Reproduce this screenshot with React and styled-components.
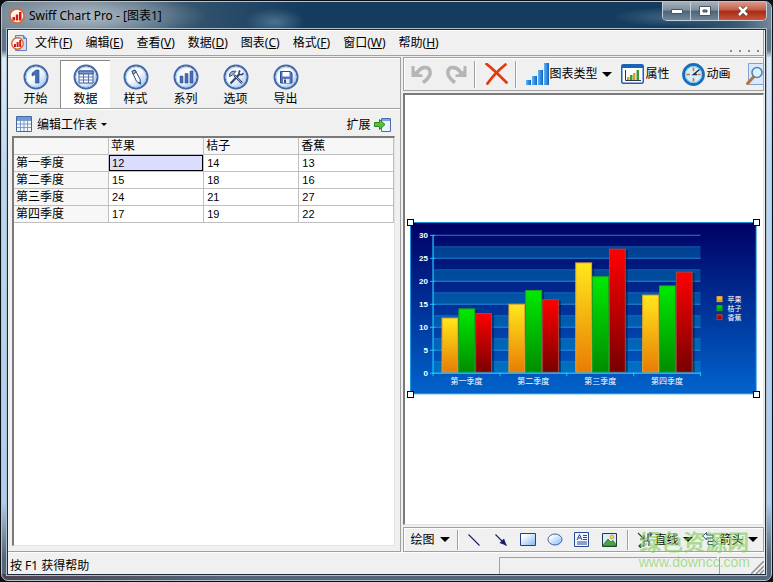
import React, { useState } from "react";
import styled, { createGlobalStyle, css } from "styled-components";

const ui = `"Noto Sans", "Noto Sans CJK SC", sans-serif`;
const arial = `"Liberation Sans", "Noto Sans CJK SC", sans-serif`;

const GlobalStyle = createGlobalStyle`
  * { box-sizing: border-box; }
  body { margin: 0; background: #0c0f14; overflow: hidden; }
  button { font: inherit; color: inherit; background: none; border: 0; padding: 0; margin: 0; cursor: default; }
  svg { display: block; flex: none; }
`;

const Desktop = styled.div`
  height: 100vh;
  padding: 1px;
  display: flex;
  font: 12px/16px ${ui};
  color: #000;
`;

const Frame = styled.div`
  flex: 1;
  min-width: 0;
  display: flex;
  flex-direction: column;
  padding: 0 5px 5px;
  border: 1px solid #b4c3cf;
  border-radius: 7px;
  background:
    linear-gradient(#153c5e, #153c5e) 50% 0 / calc(100% - 12px) 28px no-repeat,
    linear-gradient(90deg, #4e4450, #536779 30%, #536779) 0 100% / 100% 6px no-repeat,
    linear-gradient(#6b7d8d 0, #5c7588 48px, #dcebf8 56px, #b9d8f6 170px, #aecdef 500px, #566779 555px);
`;

const TitleBar = styled.header`
  flex: none;
  height: 27px;
  margin: 0 -5px;
  padding-left: 7px;
  display: flex;
  align-items: center;
  gap: 4px;
  border-radius: 6px 6px 0 0;
  background:
    radial-gradient(ellipse 120px 24px at 85px 14px, rgba(190, 202, 212, 0.75), rgba(140, 160, 176, 0.5) 60%, transparent),
    radial-gradient(ellipse 30px 14px at 273px 20px, rgba(120, 160, 190, 0.5), transparent),
    radial-gradient(ellipse 60px 10px at 670px 15px, rgba(130, 165, 190, 0.4), transparent),
    linear-gradient(90deg, #74818d 0, #7b8995 90px, #36556f 180px, #153c5e 300px, #153c5e 88%, #3d5b74 96%, #74889a);
`;

const Title = styled.h1`
  margin: 0;
  flex: 1;
  font-size: 12px;
  font-weight: 400;
`;

const WindowButtons = styled.div`
  align-self: flex-start;
  display: flex;
  height: 19px;
  margin-right: 4px;
  border: 1px solid #c4d0da;
  border-top: 0;
  border-radius: 0 0 5px 5px;
  overflow: hidden;
`;

const WindowButton = styled.button`
  width: ${(p) => (p.$close ? 47 : 28)}px;
  display: grid;
  place-items: center;
  border-right: ${(p) => (p.$close ? 0 : 1)}px solid #c4d0da;
  background: ${(p) =>
    p.$close
      ? "linear-gradient(#d99a8c, #c65b46 45%, #a62a14 50%, #c9553a)"
      : "linear-gradient(#a2b0bb, #7e909e 45%, #4c6478 50%, #6f8798)"};
`;

const Client = styled.main`
  flex: 1;
  min-height: 0;
  display: flex;
  flex-direction: column;
  position: relative;
  padding-right: 1px;
  border: 1px solid #1f2c38;
  box-shadow: 0 0 0 1px #aebdca;
  background: #f0f0f0;
`;

const MenuBar = styled.nav`
  flex: none;
  height: 26px;
  display: flex;
  align-items: center;
  gap: 13px;
  padding-left: 3px;
  border: solid #a0a0a0;
  border-width: 0 1px 1px 0;
  box-shadow: inset 1px 1px #fff;
  svg:first-child { margin-right: -5px; }
`;

const MenuItem = styled.button`
  white-space: nowrap;
`;

const Grip = styled.div`
  margin-left: auto;
  align-self: flex-end;
  display: flex;
  gap: 7px;
  padding: 0 4px 3px 0;
`;

const GripDot = styled.i`
  width: 2px;
  height: 2px;
  background: #8c8c8c;
`;

const Panes = styled.div`
  flex: 1;
  min-height: 0;
  display: grid;
  grid-template-columns: minmax(0, 12fr) minmax(0, 11fr);
  gap: 2px;
  padding-top: 1px;
`;

const Pane = styled.section`
  display: flex;
  flex-direction: column;
  min-height: 0;
  min-width: 0;
`;

const DataPane = styled(Pane)`
  border: solid #a0a0a0;
  border-width: 1px 1px 1px 0;
`;

const Tabs = styled.div`
  flex: none;
  height: 51px;
  display: flex;
  padding: 2px 0 0 2px;
  border-bottom: 1px solid #a0a0a0;
  box-shadow: inset 0 1px #fff, 0 1px #fff;
`;

const Tab = styled.button`
  width: 50px;
  height: 48px;
  padding-top: 3px;
  display: flex;
  flex-direction: column;
  align-items: center;
  gap: 1px;
  font-family: ${arial};
  border: solid transparent;
  border-width: 1px 0 0 1px;
  ${(p) =>
    p.$active &&
    css`
      background: #fff;
      border-color: #8a8a8a;
    `}
`;

const SheetBar = styled.div`
  flex: none;
  height: 27px;
  display: flex;
  align-items: center;
  justify-content: space-between;
  padding: 4px 8px 0;
`;

const BarButton = styled.button`
  display: flex;
  align-items: center;
  gap: ${(p) => p.$gap ?? 4}px;
  white-space: nowrap;
  flex: none;
`;

const Sunken = styled.div`
  flex: 1;
  min-height: 0;
  background: #fff;
  border: solid;
  border-width: 2px 1px 1px 2px;
  border-color: #7a7a7a #e3e3e3 #e3e3e3 #7a7a7a;
  overflow: hidden;
`;

const Sheet = styled(Sunken)`
  margin: 0 5px 5px 4px;
`;

const Grid = styled.table`
  width: 100%;
  table-layout: fixed;
  border-collapse: separate;
  border-spacing: 0;
  th, td {
    height: 17px;
    padding: 0 3px;
    text-align: left;
    font: 11px/16px ${arial};
    border: solid #c0c0c0;
    border-width: 0 1px 1px 0;
  }
  th {
    background: #f7f7f7;
    font-size: 12px;
    padding: 0 2px;
  }
`;

const Cell = styled.td`
  ${(p) =>
    p.$selected &&
    css`
      background: #dcdcff;
      box-shadow: inset 0 0 0 1px #000;
    `}
`;

const ChartPane = styled(Pane)`
  gap: 2px;
`;

const ToolBar = styled.div`
  flex: none;
  height: ${(p) => p.$height}px;
  display: flex;
  align-items: center;
  padding-left: ${(p) => p.$inset}px;
  border: 1px solid #a0a0a0;
  box-shadow: inset 1px 1px #fff;
  overflow: hidden;
`;

const Tool = styled(BarButton)`
  margin-right: ${(p) => p.$after}px;
`;

const Separator = styled.span`
  flex: none;
  width: 2px;
  height: ${(p) => p.$height}px;
  margin-right: ${(p) => p.$after}px;
  background: linear-gradient(90deg, #a0a0a0 50%, #fff 50%);
`;

const Label = styled.span`
  margin-right: ${(p) => p.$after}px;
`;

const Canvas = styled(Sunken)`
  display: grid;
  align-items: center;
  padding: 0 6px 2px 5px;
`;

const ChartFrame = styled.div`
  position: relative;
  svg { width: 100%; height: auto; }
`;

const Handle = styled.i`
  position: absolute;
  width: 7px;
  height: 7px;
  background: #fff;
  border: 1px solid #000;
  ${(p) => p.$v}: -3px;
  ${(p) => p.$h}: -3px;
`;

const StatusBar = styled.footer`
  flex: none;
  height: 22px;
  display: flex;
  align-items: flex-end;
  gap: 2px;
  padding-left: 2px;
  box-shadow: inset 0 1px #fff;
`;

const Message = styled.span`
  flex: 67;
`;

const StatusBox = styled.span`
  flex: ${(p) => p.$grow};
  height: 17px;
  display: flex;
  justify-content: flex-end;
  align-items: flex-end;
  border: solid #a0a0a0;
  border-width: 1px 0 0 1px;
`;

const Watermark = styled.div`
  position: absolute;
  right: 15px;
  bottom: 4px;
  color: rgba(126, 204, 82, 0.62);
  font: 14px/15px ${arial};
  text-align: center;
  pointer-events: none;
  strong { display: block; font-size: 22px; line-height: 24px; }
`;

const Logo = () => (
  <svg width="16" height="16" viewBox="0 0 16 16">
    <circle cx="8" cy="8" r="7" fill="#fff5ec" stroke="#d9682c" strokeWidth="1.6" />
    <path d="M3.500 9H6v3.500H3.500zM6.800 6.500h2.400v6H6.800zM10 4h2.500v8.500H10z" fill="#d6161c" />
  </svg>
);

const DocLogo = () => (
  <svg width="16" height="16" viewBox="0 0 16 16">
    <path d="M4.500.5h8l3 3v12h-11z" fill="#cfdcf6" stroke="#6a7fb6" />
    <path d="M12.500.5v3h3" fill="#8ba3d8" stroke="#6a7fb6" />
    <circle cx="6.500" cy="8.500" r="5.700" fill="#fff" stroke="#d9682c" strokeWidth="1.400" />
    <path d="M3 9h2v3H3zM5.600 7h2v5h-2zM8.200 5h2v7h-2z" fill="#d6161c" />
  </svg>
);

const Caret = ({ w = 10 }) => (
  <svg width={w} height={w / 2} viewBox="0 0 10 5"><path d="M0 0h10L5 5z" fill="#000" /></svg>
);

const glyphs = {
  start: (
    <path d="M9 9.200 13 6h3v13h-3.500V10.500L9 12z" fill="#4a6cb4" stroke="#274882" strokeWidth=".6" />
  ),
  data: (
    <g>
      <path d="M6 7h14v12H6z" fill="#fff" stroke="#3a568f" />
      <path d="M6 7h14v3H6z" fill="#7896cc" stroke="#3a568f" />
      <path d="M6 13h14M6 16h14M10.500 10v9M15.500 10v9" stroke="#5673ac" />
    </g>
  ),
  style: (
    <g stroke="#33496f" strokeLinejoin="round">
      <path d="M9 7.500 12 6l5 9 .5 5-4-2.700z" fill="#fff" />
      <path d="M9 7.500 12 6l1.200 2.200L10.300 10z" fill="#a9bcdc" />
      <path d="m16.200 18.200 1.300 1.800-2.200-1.300z" fill="#33496f" />
    </g>
  ),
  series: (
    <g fill="#4a6cb0" stroke="#2c4a88" strokeWidth=".5">
      <path d="M7 12h3v7H7zM12 9.500h3V19h-3zM17 7h3v12h-3z" />
    </g>
  ),
  options: (
    <g fill="none" stroke="#34486c">
      <path d="m7.500 19.500 9-9.500" strokeWidth="2.200" />
      <path d="m11 11 8 8" strokeWidth="2.400" />
      <path d="m11.500 11.500 7 7" stroke="#b9c9e6" strokeWidth=".8" />
      <path d="M6.500 12.500C6 9 8.500 6.500 13 7.300L9.500 11z" fill="#9db2d8" />
      <path d="M17.300 6.500c-2.300 1.300-1.600 4.200.8 4.300 1.300 0 2-.8 2.200-2" strokeWidth="1.600" />
    </g>
  ),
  export: (
    <g>
      <path d="M7.500 7.500h10l1.500 1.500v10H7.500z" fill="#5674c0" stroke="#2f4c90" />
      <path d="M9.500 8h7v4.500h-7z" fill="#fff" />
      <path d="M10 15h6.500v4H10z" fill="#e4ecf9" />
      <path d="M11 15.500h2V19h-2z" fill="#2f4c90" />
    </g>
  ),
};

const RoundIcon = ({ name }) => (
  <svg width="26" height="26" viewBox="0 0 26 26">
    <defs>
      <linearGradient id={`disc-${name}`} x1="0" y1="0" x2="1" y2="1">
        <stop offset="0" stopColor="#d6ebff" />
        <stop offset=".45" stopColor="#fff" />
        <stop offset="1" stopColor="#8dbcf0" />
      </linearGradient>
    </defs>
    <circle cx="13" cy="13" r="11.500" fill={`url(#disc-${name})`} stroke="#4567a6" strokeWidth="2" />
    <circle cx="13" cy="13" r="10" fill="none" stroke="#a9cdf3" />
    {glyphs[name]}
  </svg>
);

const SheetIcon = () => (
  <svg width="17" height="17" viewBox="0 0 17 17">
    <path d="M.5.500h15v15H.5z" fill="#f4f9ff" stroke="#47689f" />
    <path d="M1 1h14v3H1z" fill="#6c9ad8" />
    <path d="M1 4.500h14M1 8h14M1 11.500h14M4.500 4v11M8 4v11M11.500 4v11" stroke="#7c9ac6" />
  </svg>
);

const ExpandIcon = () => (
  <svg width="18" height="16" viewBox="0 0 18 16">
    <path d="M7.500 1.500h9v13h-9z" fill="#eaf4ff" stroke="#4a6fae" />
    <path d="M8 2h8v2H8z" fill="#7aa2df" />
    <path d="M.5 5.500h5v-3l5.500 5-5.500 5v-3h-5z" fill="#58c23a" stroke="#2b8423" />
  </svg>
);

const Undo = ({ flip }) => (
  <svg width="24" height="22" viewBox="0 0 24 22">
    <g transform={flip ? "matrix(-1 0 0 1 24 0)" : undefined}>
      <path d="M6.500 11C10 3.500 18.500 2.500 20 8c1 4-2 8-7 11.500" fill="none" stroke="#b5b5b5" strokeWidth="3.600" />
      <path d="M1.500 3v11h11v-2.500L8.500 11 4.500 7.500V3z" fill="#b5b5b5" />
    </g>
  </svg>
);

const Cross = () => (
  <svg width="23" height="22" viewBox="0 0 23 22">
    <path d="M1.500 1c7 5.500 13 11.500 20 18.500M20.500 1.500C13 7.500 7.500 13.500 2.500 20.500" fill="none" stroke="#e03a10" strokeWidth="2.800" strokeLinecap="round" />
  </svg>
);

const TypeIcon = () => (
  <svg width="23" height="24" viewBox="0 0 23 24">
    <defs>
      <linearGradient id="type-bar" x1="0" x2="1">
        <stop offset="0" stopColor="#62b5f5" /><stop offset="1" stopColor="#0e63c5" />
      </linearGradient>
    </defs>
    <g fill="url(#type-bar)">
      <path d="M0 18h5v5H0z" /><path d="M6 14h5v9H6z" /><path d="M12 8h5v15h-5z" /><path d="M18 1h5v22h-5z" />
    </g>
  </svg>
);

const PropsIcon = () => (
  <svg width="23" height="20" viewBox="0 0 23 20">
    <rect x=".75" y=".75" width="21.500" height="18.500" rx="1.500" fill="#fff" stroke="#1c62b6" strokeWidth="1.500" />
    <path d="M1 1h21v3H1z" fill="#1c62b6" />
    <path d="M4.500 6v10.500H20" fill="none" stroke="#334" />
    <path d="M6 13h2.500v3H6zM12 9h2.500v7H12z" fill="#e89a14" />
    <path d="M9 11h2.500v5H9zM15.500 6H18v10h-2.500z" fill="#3b9a35" />
  </svg>
);

const ClockIcon = () => (
  <svg width="23" height="23" viewBox="0 0 23 23">
    <circle cx="11.500" cy="11.500" r="10" fill="#d6f0fb" stroke="#1c6bb6" strokeWidth="2.800" />
    <circle cx="11.500" cy="11.500" r="8" fill="none" stroke="#80c8ea" />
    <path d="M11.500 4.500V8M11.500 15v3.500M4.500 11.500H8M15.500 11.500h3" stroke="#e06a3c" strokeWidth="1.600" />
    <path d="m17.500 6.500-6 5H15" fill="none" stroke="#19334e" strokeWidth="1.500" />
  </svg>
);

const PreviewIcon = () => (
  <svg width="23" height="24" viewBox="0 0 23 24">
    <path d="M2.500 1.500h14l5 5v16h-19z" fill="#dce8fb" stroke="#7e9fd8" />
    <path d="m8 14.500-6.500 7" stroke="#b6713c" strokeWidth="3" strokeLinecap="round" />
    <circle cx="11" cy="10.500" r="5" fill="#d9f2ff" stroke="#5a80ac" strokeWidth="1.600" />
  </svg>
);

const LineIcon = ({ arrow }) => (
  <svg width="12" height="12" viewBox="0 0 12 12">
    <path d="m.5.5 11 11" stroke="#1b1b6e" strokeWidth="1.100" />
    {arrow && <path d="M11.500 11.500 9 4.500 4.500 9z" fill="#1b1b6e" />}
  </svg>
);

const ShapeIcon = ({ round }) => (
  <svg width="16" height="13" viewBox="0 0 16 13">
    <defs>
      <linearGradient id={`shape-${!!round}`} x1="0" y1="0" x2="1" y2="1">
        <stop offset=".2" stopColor="#fff" /><stop offset="1" stopColor="#7fb8f4" />
      </linearGradient>
    </defs>
    {round
      ? <ellipse cx="8" cy="6.500" rx="7" ry="5.500" fill="url(#shape-true)" stroke="#3f61a5" />
      : <path d="M.5.5h15v12H.5z" fill="url(#shape-false)" stroke="#243f86" />}
  </svg>
);

const TextBoxIcon = () => (
  <svg width="16" height="15" viewBox="0 0 16 15">
    <path d="M.5.5h14v14H.5z" fill="#eff6ff" stroke="#2b4a94" />
    <path d="m3 8 2.500-5.500L8 8M4 6h3M9 3.500h4M9 5.500h4M9 7.500h4M3 10h10M3 12h10" fill="none" stroke="#2b4a94" />
  </svg>
);

const PictureIcon = () => (
  <svg width="15" height="14" viewBox="0 0 15 14">
    <path d="M.5.5h14v13H.5z" fill="#d7edff" stroke="#22364e" />
    <circle cx="10" cy="4" r="1.800" fill="#ffd83a" stroke="#c78a14" strokeWidth=".7" />
    <path d="m1 12 5-6 3 3 2-1.500 3 4V13H1z" fill="#4fa33c" stroke="#246824" strokeWidth=".7" />
  </svg>
);

const ConnectorIcon = () => (
  <svg width="16" height="16" viewBox="0 0 16 16" fill="none" stroke="#26445c">
    <path d="m1 1 6 6M7 3v4H3M2 14h5V9h4V2h4M12.500 0 15 2l-2.500 2.500M4 12l-2 2 2 2M12 9v5" strokeWidth="1.200" />
  </svg>
);

const ArrowsIcon = () => (
  <svg width="16" height="16" viewBox="0 0 16 16" fill="#eaf6ff" stroke="#26506c">
    <path d="m.7 4 4-3.500V3H11v3H4.700v2zM15.300 11.500l-4 3.500v-2.500H6v-3h5.300V7.500z" />
  </svg>
);

const quarters = ["第一季度", "第二季度", "第三季度", "第四季度"];
const series = [
  { name: "苹果", values: [12, 15, 24, 17], id: "s-apple", from: "#ffe81c", to: "#e97c04", edge: "#e5a530" },
  { name: "桔子", values: [14, 18, 21, 19], id: "s-orange", from: "#00ea00", to: "#008c00", edge: "#19a819" },
  { name: "香蕉", values: [13, 16, 27, 22], id: "s-banana", from: "#ff0000", to: "#780000", edge: "#a8443c" },
];

const AXIS_X = 23;
const AXIS_END = 290;
const BASE_Y = 151;
const STEP = 4.59;
const GROUP = (AXIS_END - AXIS_X) / quarters.length;
const BAR = 16.8;
const yOf = (v) => BASE_Y - v * STEP;

const ChartText = styled.text`
  fill: #fff;
  font: ${(p) => (p.$bold ? "bold 8px" : p.$small ? "7px" : "8px")} ${arial};
`;

const BarChart = () => (
  <svg viewBox="0 0 346 172" role="img" aria-label="图表1">
    <defs>
      <linearGradient id="chart-bg" x1="0" y1="0" x2="0" y2="1">
        <stop offset="0" stopColor="#000064" /><stop offset="1" stopColor="#0064cc" />
      </linearGradient>
      {series.map((s) => (
        <linearGradient key={s.id} id={s.id} x1="0" y1="0" x2="0" y2="1">
          <stop offset="0" stopColor={s.from} /><stop offset="1" stopColor={s.to} />
        </linearGradient>
      ))}
    </defs>
    <rect x=".5" y=".5" width="345" height="171" fill="url(#chart-bg)" stroke="#1698dc" />
    {[0, 5, 10, 15, 20, 25].map((v) => (
      <rect key={v} x={AXIS_X} y={yOf(v + 2.5)} width={AXIS_END - AXIS_X} height={2.5 * STEP} fill="#00a0c8" opacity=".35" />
    ))}
    {[2.5, 5, 7.5, 10, 12.5, 15, 17.5, 20, 22.5, 25, 27.5, 30].map((v) => (
      <path key={v} d={`M${AXIS_X} ${yOf(v)}H${AXIS_END}`} stroke="#2b9be8" opacity={v % 5 ? 0.45 : 0.8} />
    ))}
    {quarters.map((q, i) =>
      series.map((s, j) => {
        const x = AXIS_X + i * GROUP + 8.5 + j * BAR;
        const h = s.values[i] * STEP;
        return (
          <g key={s.id}>
            <rect x={x + 2} y={yOf(s.values[i]) + 1} width={BAR} height={h - 2} fill="#00143c" opacity=".5" />
            <rect x={x + 0.5} y={yOf(s.values[i])} width={BAR - 1} height={h - 1} fill={`url(#${s.id})`} stroke={s.edge} />
          </g>
        );
      })
    )}
    <path d={`M${AXIS_X} 13V${BASE_Y}H${AXIS_END}`} fill="none" stroke="#18b4f4" strokeWidth="1.400" />
    {quarters.concat("").map((q, i) => (
      <path key={i} d={`M${AXIS_X + i * GROUP} ${BASE_Y - 1}v4`} stroke="#18c4ff" />
    ))}
    {[0, 5, 10, 15, 20, 25, 30].map((v) => (
      <g key={v}>
        <path d={`M20 ${yOf(v)}h5`} stroke="#18c4ff" />
        <ChartText $bold x="18" y={yOf(v) + 3} textAnchor="end">{v}</ChartText>
      </g>
    ))}
    {quarters.map((q, i) => (
      <ChartText key={q} x={AXIS_X + (i + 0.5) * GROUP} y="162" textAnchor="middle">{q}</ChartText>
    ))}
    {series.map((s, i) => (
      <g key={s.id}>
        <rect x="306.500" y={74.5 + i * 9} width="5" height="5" fill={`url(#${s.id})`} stroke={s.edge} />
        <ChartText $small x="317" y={80 + i * 9}>{s.name}</ChartText>
      </g>
    ))}
  </svg>
);

const menus = [["文件", "F"], ["编辑", "E"], ["查看", "V"], ["数据", "D"], ["图表", "C"], ["格式", "F"], ["窗口", "W"], ["帮助", "H"]];
const tabs = [["start", "开始"], ["data", "数据"], ["style", "样式"], ["series", "系列"], ["options", "选项"], ["export", "导出"]];

export default function App() {
  const [tab, setTab] = useState("data");
  const [cell, setCell] = useState("0-0");
  return (
    <Desktop>
      <GlobalStyle />
      <Frame>
        <TitleBar>
          <Logo />
          <Title>Swiff Chart Pro - [图表1]</Title>
          <WindowButtons>
            <WindowButton aria-label="最小化">
              <svg width="12" height="5"><path d="M.5.5h11v4H.5z" fill="#fff" stroke="#4a5560" /></svg>
            </WindowButton>
            <WindowButton aria-label="最大化">
              <svg width="12" height="10"><path d="M.5.5h11v9H.5z" fill="#fff" stroke="#4a5560" /><path d="M4 4h4v2H4z" fill="#5d7384" stroke="#4a5560" /></svg>
            </WindowButton>
            <WindowButton $close aria-label="关闭">
              <svg width="12" height="10"><path d="m2 1 8 8M10 1 2 9" stroke="#5c3a36" strokeWidth="4" /><path d="m2 1 8 8M10 1 2 9" stroke="#fff" strokeWidth="2.500" /></svg>
            </WindowButton>
          </WindowButtons>
        </TitleBar>
        <Client>
          <MenuBar>
            <DocLogo />
            {menus.map(([label, key]) => (
              <MenuItem key={label}>{label}(<u>{key}</u>)</MenuItem>
            ))}
            <Grip><GripDot /><GripDot /><GripDot /><GripDot /></Grip>
          </MenuBar>
          <Panes>
            <DataPane>
              <Tabs>
                {tabs.map(([id, label]) => (
                  <Tab key={id} $active={tab === id} onClick={() => setTab(id)}>
                    <RoundIcon name={id} />
                    {label}
                  </Tab>
                ))}
              </Tabs>
              <SheetBar>
                <BarButton><SheetIcon />编辑工作表<Caret w={6} /></BarButton>
                <BarButton>扩展<ExpandIcon /></BarButton>
              </SheetBar>
              <Sheet>
                <Grid>
                  <thead>
                    <tr><th />{series.map((s) => <th key={s.id} scope="col">{s.name}</th>)}</tr>
                  </thead>
                  <tbody>
                    {quarters.map((q, r) => (
                      <tr key={q}>
                        <th scope="row">{q}</th>
                        {series.map((s, c) => (
                          <Cell key={s.id} $selected={cell === `${r}-${c}`} onClick={() => setCell(`${r}-${c}`)}>
                            {s.values[r]}
                          </Cell>
                        ))}
                      </tr>
                    ))}
                  </tbody>
                </Grid>
              </Sheet>
            </DataPane>
            <ChartPane>
              <ToolBar $height={34} $inset={6}>
                <Tool $after={10} aria-label="撤销"><Undo /></Tool>
                <Tool $after={6} aria-label="重做"><Undo flip /></Tool>
                <Separator $height={27} $after={9} />
                <Tool $after={7} aria-label="删除"><Cross /></Tool>
                <Separator $height={27} $after={9} />
                <Tool $after={9} $gap={0}><TypeIcon /><Label $after={5}>图表类型</Label><Caret /></Tool>
                <Tool $after={13} $gap={1}><PropsIcon />属性</Tool>
                <Tool $after={16} $gap={1}><ClockIcon />动画</Tool>
                <Tool $after={0} aria-label="预览"><PreviewIcon /></Tool>
              </ToolBar>
              <Canvas>
                <ChartFrame>
                  <BarChart />
                  <Handle $v="top" $h="left" />
                  <Handle $v="top" $h="right" />
                  <Handle $v="bottom" $h="left" />
                  <Handle $v="bottom" $h="right" />
                </ChartFrame>
              </Canvas>
              <ToolBar $height={25} $inset={6}>
                <Tool $after={7} $gap={6}>绘图<Caret /></Tool>
                <Separator $height={20} $after={9} />
                <Tool $after={15} aria-label="线条"><LineIcon /></Tool>
                <Tool $after={13} aria-label="箭头"><LineIcon arrow /></Tool>
                <Tool $after={11} aria-label="矩形"><ShapeIcon /></Tool>
                <Tool $after={11} aria-label="椭圆"><ShapeIcon round /></Tool>
                <Tool $after={12} aria-label="文本框"><TextBoxIcon /></Tool>
                <Tool $after={10} aria-label="图片"><PictureIcon /></Tool>
                <Separator $height={20} $after={8} />
                <Tool $after={9} $gap={1}><ConnectorIcon /><Label $after={4}>直线</Label><Caret /></Tool>
                <Tool $after={0} $gap={1}><ArrowsIcon /><Label $after={4}>箭头</Label><Caret /></Tool>
              </ToolBar>
            </ChartPane>
          </Panes>
          <StatusBar>
            <Message>按 F1 获得帮助</Message>
            <StatusBox $grow={30} />
            <StatusBox $grow={6}>
              <svg width="13" height="13" viewBox="0 0 13 13"><path d="M0 13 13 0M5 13l8-8M9 13l4-4" stroke="#909090" strokeWidth="1.500" /></svg>
            </StatusBox>
          </StatusBar>
          <Watermark><strong>绿色资源网</strong>www.downcc.com</Watermark>
        </Client>
      </Frame>
    </Desktop>
  );
}
